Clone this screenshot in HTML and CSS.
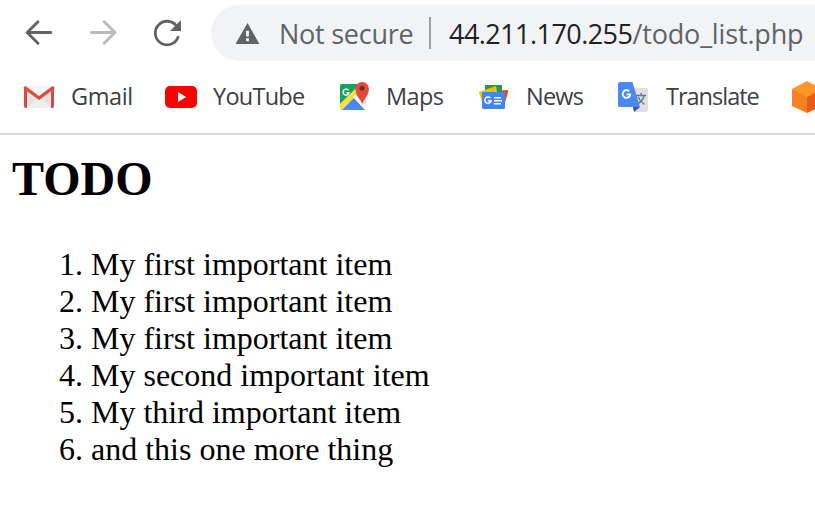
FILE: index.html
```
<!DOCTYPE html>
<html lang="en">
<head>
<meta charset="utf-8">
<title>TODO</title>
<link rel="stylesheet" href="styles.css">
</head>
<body>
<header class="browser">
  <div class="toolbar">
    <nav class="nav">
      <svg class="nav-icon" viewBox="0 0 32 32"><path d="M27.8 15.5H4.5M15 4.7L4.2 15.5l10.8 10.8" fill="none" stroke="#5f6368" stroke-width="2.9" stroke-linecap="round" stroke-linejoin="round"/></svg>
      <svg class="nav-icon" viewBox="0 0 32 32"><path d="M4.5 15.5h23.3M17.2 4.7L28 15.5 17.2 26.3" fill="none" stroke="#bababa" stroke-width="2.9" stroke-linecap="round" stroke-linejoin="round"/></svg>
      <svg class="nav-icon" viewBox="0 0 32 32"><path d="M27.1 20.3A11.8 11.8 0 1 1 25.5 8.9" fill="none" stroke="#5f6368" stroke-width="2.8" stroke-linecap="round"/><path d="M30 3v11H19z" fill="#5f6368"/></svg>
    </nav>
    <div class="address">
      <svg class="warning" viewBox="0 0 26 24"><path d="M13 1l12.5 22H.5z" fill="#5f6368"/><path d="M11.5 9h3v6h-3zM11.5 17h3v3h-3z" fill="#f1f3f4"/></svg>
      <span class="security">Not secure</span>
      <span class="divider"></span>
      <span class="url"><span class="host">44.211.170.255</span><span class="path">/todo_list.php</span></span>
    </div>
  </div>
  <div class="bookmarks">
    <a class="bookmark">
      <svg class="icon" viewBox="0 0 32 32"><rect x="1" y="5" width="30" height="22" rx="2" fill="#e4e4e4"/><path d="M3 27l13-11 13 11z" fill="#eee"/><path d="M4 5h24L16 15z" fill="#f5f5f5"/><path d="M1 7v18q0 2 2 2h1V10zM31 7v18q0 2-2 2h-1V10z" fill="#d54c3f"/><path d="M2.3 7L16 17 29.7 7" fill="none" stroke="#dc4b3e" stroke-width="3.3" stroke-linecap="round"/></svg>
      <span class="label gmail">Gmail</span>
    </a>
    <a class="bookmark">
      <svg class="icon" viewBox="0 0 32 32"><rect y="5" width="32" height="22" rx="5" fill="#f00"/><path d="M13 11l8.2 5-8.2 5z" fill="#fff"/></svg>
      <span class="label youtube">YouTube</span>
    </a>
    <a class="bookmark">
      <svg class="icon" viewBox="0 0 32 32"><path d="M4 3h22a2 2 0 0 1 2 2v22a2 2 0 0 1-2 2H4a2 2 0 0 1-2-2V5a2 2 0 0 1 2-2z" fill="#dadada"/><path d="M2 26V5q0-2 2-2h21z" fill="#1aa15f"/><path d="M2 23L22 3h6v2L3 29l-1-2z" fill="#ffdf3d"/><path d="M4 29l12-12 12 12z" fill="#4688f4"/><path d="M15 16l2-2 11 11v4h-1z" fill="#fff"/><path d="M24.2 24c-.5-6-6.7-8-6.7-16.3a6.7 6.7 0 1 1 13.4 0C30.9 16 24.7 18 24.2 24z" fill="#de4c3d"/><circle cx="24.1" cy="7.3" r="2.5" fill="#7a2925"/><path d="M10.4 9.2a3 3 0 1 0 .6 2.5H8.4" fill="none" stroke="#fff" stroke-width="1.4"/></svg>
      <span class="label maps">Maps</span>
    </a>
    <a class="bookmark">
      <svg class="icon" viewBox="0 0 32 32"><rect x="7" y="4" width="17" height="15" rx="1" fill="#139f5a"/><path d="M13 10l16-1q1.5 0 1.2 1.5L26 25z" fill="#ea4335"/><path d="M.8 11L18 5l3 16-16 3z" fill="#fbbc04"/><rect x="4" y="11" width="23" height="17" rx="1.3" fill="#4285f4"/><path d="M12.3 17a3.2 3.2 0 1 0 .8 3H9.8" fill="none" stroke="#fff" stroke-width="1.5"/><path d="M16 16.8h7M16 19.8h8M16 22.8h7" stroke="#fff" stroke-width="1.6"/></svg>
      <span class="label news">News</span>
    </a>
    <a class="bookmark">
      <svg class="icon" viewBox="0 0 32 32"><path d="M12 7h16q2 0 2 2v20q0 2-2 2H16z" fill="#e0e0e0"/><path d="M15 26h7l-6 5z" fill="#3051bd"/><path d="M2 1h12.5L22 26H2q-2 0-2-2V3q0-2 2-2z" fill="#4c88f1"/><path d="M18 14.5h10M23.2 12v2.5M26 15q-1.3 5.2-7 8.2M20.2 16q1.7 4.4 6.2 7.4" fill="none" stroke="#607d8b" stroke-width="1.5"/><path d="M11.2 10.4a3.8 3.8 0 1 0 1 3H8.6" fill="none" stroke="#fff" stroke-width="1.8"/></svg>
      <span class="label translate">Translate</span>
    </a>
    <a class="bookmark clipped">
      <svg class="icon" viewBox="0 0 32 32"><path d="M2 8l15 6v18L2 25z" fill="#f58220"/><path d="M17 13l15-5v17l-15 7z" fill="#e95b1c"/><path d="M2 8L17 0l15 8-15 8z" fill="#fb9827"/></svg>
    </a>
  </div>
</header>
<main class="page">
  <h1 class="title">TODO</h1>
  <ol class="list">
    <li>My first important item</li>
    <li>My first important item</li>
    <li>My first important item</li>
    <li>My second important item</li>
    <li>My third important item</li>
    <li>and this one more thing</li>
  </ol>
</main>
</body>
</html>
```
FILE: styles.css
```
* { box-sizing: border-box; }
body {
  margin: 0;
  background: #fff;
  color: #000;
  font-family: "Liberation Serif", serif;
  overflow: hidden;
}
svg { display: block; flex: none; }
.browser {
  height: 135px;
  border-bottom: 2px solid #d9dadc;
  font-family: "Open Sans", "Noto Sans", sans-serif;
  white-space: nowrap;
}
.toolbar { display: flex; padding-top: 5px; }
.nav {
  display: flex;
  align-items: center;
  gap: 32px;
  width: 211px;
  flex: none;
  padding-left: 23px;
}
.nav-icon { width: 32px; height: 32px; }
.address {
  display: flex;
  align-items: center;
  flex: 1;
  min-width: 0;
  height: 56px;
  padding-left: 24px;
  border-radius: 28px 0 0 28px;
  background: #f1f3f4;
  font-size: 27px;
}
.warning { width: 25px; height: 23px; }
.security {
  width: 150px;
  margin-left: 19px;
  color: #5f6368;
  letter-spacing: -0.25px;
}
.divider { width: 2px; height: 32px; background: #9aa0a6; }
.url { margin-left: 18px; }
.host { color: #202124; letter-spacing: -0.55px; }
.path { color: #5f6368; letter-spacing: -0.15px; }
.bookmarks {
  display: grid;
  grid-template-columns: 142px 173px 140px 140px 172px 25px;
  padding: 15px 0 0 23px;
}
.bookmark { display: flex; align-items: center; height: 42px; gap: 16px; }
.clipped { overflow: hidden; }
.icon { width: 32px; height: 32px; }
.label {
  padding-bottom: 2px;
  color: #3c4043;
  font-size: 23.5px;
}
.gmail { letter-spacing: -0.4px; }
.youtube { letter-spacing: -0.75px; }
.maps { letter-spacing: -0.6px; }
.news { letter-spacing: -0.8px; }
.translate { letter-spacing: -1px; }
.page { padding: 16px 12px 0; }
.title { margin: 0; font-size: 48px; line-height: 55px; }
.list {
  margin: 40px 0 0;
  padding-left: 79px;
  font-size: 32px;
  line-height: 37px;
}
```
